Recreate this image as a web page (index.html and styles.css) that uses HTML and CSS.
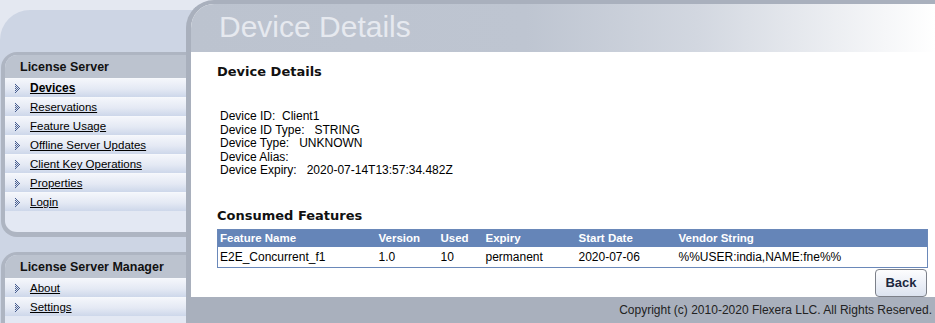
FILE: index.html
```html
<!DOCTYPE html>
<html lang="en">
<head>
  <meta charset="UTF-8" />
  <title>Device Details</title>
  <link rel="stylesheet" href="styles.css">
</head>
<body>
  <div class="layout">
    <!-- Menu lateral -->
    <aside class="sidebar">
      <div class="navbox">
        <div class="navbox-title">License Server</div>
        <ul class="navlist">
          <li class="nav-item active"><svg class="arrow" width="7" height="9" viewBox="0 0 7 9"><path d="M0 0h1v1H0zM1 1h1v1H1zM0 2h1v1H0zM2 2h1v1H2zM1 3h1v1H1zM3 3h1v1H3zM0 4h1v1H0zM2 4h1v1H2zM4 4h1v1H4zM1 5h1v1H1zM3 5h1v1H3zM0 6h1v1H0zM2 6h1v1H2zM1 7h1v1H1zM0 8h1v1H0z"/></svg><a href="#">Devices</a></li>
          <li class="nav-item"><svg class="arrow" width="7" height="9" viewBox="0 0 7 9"><path d="M0 0h1v1H0zM1 1h1v1H1zM0 2h1v1H0zM2 2h1v1H2zM1 3h1v1H1zM3 3h1v1H3zM0 4h1v1H0zM2 4h1v1H2zM4 4h1v1H4zM1 5h1v1H1zM3 5h1v1H3zM0 6h1v1H0zM2 6h1v1H2zM1 7h1v1H1zM0 8h1v1H0z"/></svg><a href="#">Reservations</a></li>
          <li class="nav-item"><svg class="arrow" width="7" height="9" viewBox="0 0 7 9"><path d="M0 0h1v1H0zM1 1h1v1H1zM0 2h1v1H0zM2 2h1v1H2zM1 3h1v1H1zM3 3h1v1H3zM0 4h1v1H0zM2 4h1v1H2zM4 4h1v1H4zM1 5h1v1H1zM3 5h1v1H3zM0 6h1v1H0zM2 6h1v1H2zM1 7h1v1H1zM0 8h1v1H0z"/></svg><a href="#">Feature Usage</a></li>
          <li class="nav-item"><svg class="arrow" width="7" height="9" viewBox="0 0 7 9"><path d="M0 0h1v1H0zM1 1h1v1H1zM0 2h1v1H0zM2 2h1v1H2zM1 3h1v1H1zM3 3h1v1H3zM0 4h1v1H0zM2 4h1v1H2zM4 4h1v1H4zM1 5h1v1H1zM3 5h1v1H3zM0 6h1v1H0zM2 6h1v1H2zM1 7h1v1H1zM0 8h1v1H0z"/></svg><a href="#">Offline Server Updates</a></li>
          <li class="nav-item"><svg class="arrow" width="7" height="9" viewBox="0 0 7 9"><path d="M0 0h1v1H0zM1 1h1v1H1zM0 2h1v1H0zM2 2h1v1H2zM1 3h1v1H1zM3 3h1v1H3zM0 4h1v1H0zM2 4h1v1H2zM4 4h1v1H4zM1 5h1v1H1zM3 5h1v1H3zM0 6h1v1H0zM2 6h1v1H2zM1 7h1v1H1zM0 8h1v1H0z"/></svg><a href="#">Client Key Operations</a></li>
          <li class="nav-item"><svg class="arrow" width="7" height="9" viewBox="0 0 7 9"><path d="M0 0h1v1H0zM1 1h1v1H1zM0 2h1v1H0zM2 2h1v1H2zM1 3h1v1H1zM3 3h1v1H3zM0 4h1v1H0zM2 4h1v1H2zM4 4h1v1H4zM1 5h1v1H1zM3 5h1v1H3zM0 6h1v1H0zM2 6h1v1H2zM1 7h1v1H1zM0 8h1v1H0z"/></svg><a href="#">Properties</a></li>
          <li class="nav-item"><svg class="arrow" width="7" height="9" viewBox="0 0 7 9"><path d="M0 0h1v1H0zM1 1h1v1H1zM0 2h1v1H0zM2 2h1v1H2zM1 3h1v1H1zM3 3h1v1H3zM0 4h1v1H0zM2 4h1v1H2zM4 4h1v1H4zM1 5h1v1H1zM3 5h1v1H3zM0 6h1v1H0zM2 6h1v1H2zM1 7h1v1H1zM0 8h1v1H0z"/></svg><a href="#">Login</a></li>
        </ul>
        <div class="navbox-fill"></div>
      </div>

      <div class="navbox">
        <div class="navbox-title">License Server Manager</div>
        <ul class="navlist">
          <li class="nav-item"><svg class="arrow" width="7" height="9" viewBox="0 0 7 9"><path d="M0 0h1v1H0zM1 1h1v1H1zM0 2h1v1H0zM2 2h1v1H2zM1 3h1v1H1zM3 3h1v1H3zM0 4h1v1H0zM2 4h1v1H2zM4 4h1v1H4zM1 5h1v1H1zM3 5h1v1H3zM0 6h1v1H0zM2 6h1v1H2zM1 7h1v1H1zM0 8h1v1H0z"/></svg><a href="#">About</a></li>
          <li class="nav-item"><svg class="arrow" width="7" height="9" viewBox="0 0 7 9"><path d="M0 0h1v1H0zM1 1h1v1H1zM0 2h1v1H0zM2 2h1v1H2zM1 3h1v1H1zM3 3h1v1H3zM0 4h1v1H0zM2 4h1v1H2zM4 4h1v1H4zM1 5h1v1H1zM3 5h1v1H3zM0 6h1v1H0zM2 6h1v1H2zM1 7h1v1H1zM0 8h1v1H0z"/></svg><a href="#">Settings</a></li>
        </ul>
        <div class="navbox-fill"></div>
      </div>
    </aside>

    <!-- Conteúdo principal -->
    <div class="main-wrap">
      <div class="main">
        <div class="page-header">
          <h1>Device Details</h1>
        </div>

        <div class="content">
          <h2>Device Details</h2>
          <div class="details">
            <div>Device ID:&nbsp; Client1</div>
            <div>Device ID Type:&nbsp;&nbsp; STRING</div>
            <div>Device Type:&nbsp;&nbsp; UNKNOWN</div>
            <div>Device Alias:</div>
            <div>Device Expiry:&nbsp;&nbsp; 2020-07-14T13:57:34.482Z</div>
          </div>

          <h2 class="section-title">Consumed Features</h2>
          <table class="features">
            <thead>
              <tr>
                <th class="col-name">Feature Name</th>
                <th class="col-version">Version</th>
                <th class="col-used">Used</th>
                <th class="col-expiry">Expiry</th>
                <th class="col-start">Start Date</th>
                <th>Vendor String</th>
              </tr>
            </thead>
            <tbody>
              <tr>
                <td>E2E_Concurrent_f1</td>
                <td>1.0</td>
                <td>10</td>
                <td>permanent</td>
                <td>2020-07-06</td>
                <td>%%USER:india,NAME:fne%%</td>
              </tr>
            </tbody>
          </table>

          <div class="actions">
            <button class="btn-back">Back</button>
          </div>
        </div>

        <div class="footer">Copyright (c) 2010-2020 Flexera LLC. All Rights Reserved.</div>
      </div>
    </div>
  </div>
</body>
</html>
```

FILE: styles.css
```css
* {
  box-sizing: border-box;
}

body {
  margin: 0;
  height: 100vh;
  overflow: hidden;
  background: #e4e8f1;
  font-family: 'Liberation Sans', Arial, sans-serif;
  font-size: 12px;
  color: #000;
}

.layout {
  display: grid;
  grid-template-columns: 186px 1fr;
  grid-template-rows: minmax(0, 1fr);
  height: 100%;
}

/* menu lateral */
.sidebar {
  min-height: 0;
  overflow: hidden;
  margin-top: 10px;
  padding-top: 42px;
  background: #cdd5e4;
  border-top-left-radius: 30px;
}

.navbox {
  margin-left: 1px;
  border: solid #aeb5c2;
  border-width: 3px 0 5px 4px;
  border-radius: 16px 0 0 16px;
  background: #e3e8f3;
  overflow: hidden;
}

.navbox + .navbox {
  margin-top: 15px;
}

.navbox-title {
  height: 23px;
  line-height: 24px;
  padding-left: 15px;
  background: #bcc3cf;
  font-size: 12.5px;
  font-weight: bold;
  color: #111;
}

.navlist {
  list-style: none;
  margin: 0;
  padding: 0;
}

.nav-item {
  display: flex;
  align-items: center;
  gap: 8px;
  height: 19px;
  padding-left: 10px;
  border-top: 1px solid #f6f8fc;
  background: linear-gradient(#f4f6fb, #e4e9f4 55%, #cdd7ea);
  font-size: 11.5px;
}

.nav-item .arrow {
  fill: #465c8e;
  flex-shrink: 0;
}

.nav-item a {
  color: #000;
  text-decoration: underline;
}

.nav-item.active a {
  font-size: 12px;
  font-weight: bold;
}

.navbox-fill {
  height: 21px;
}

/* área principal */
.main-wrap {
  min-height: 0;
  background: linear-gradient(#e4e8f1 10px, #cdd5e4 10px);
}

.main {
  height: 100%;
  display: flex;
  flex-direction: column;
  background: #fff;
  border-left: 5px solid #a9b0bd;
  border-top: 4px solid #a9b0bd;
  border-top-left-radius: 28px;
  overflow: hidden;
}

.page-header {
  flex-shrink: 0;
  height: 48px;
  padding: 6px 0 0 28px;
  background: linear-gradient(to right, #bcc3cf, #bec5d1 45%, #d2d7e0 68%, #fff);
}

.page-header h1 {
  margin: 0;
  font-size: 30px;
  font-weight: normal;
  line-height: 34px;
  color: #e6e9ef;
}

.content {
  flex: 1;
  min-height: 0;
  display: flex;
  flex-direction: column;
  padding: 12px 7px 0 26px;
}

.content h2 {
  margin: 0;
  font-family: 'DejaVu Sans', sans-serif;
  font-size: 13px;
  font-weight: bold;
  line-height: 16px;
  color: #111;
}

.details {
  margin: 30px 0 0 3px;
  line-height: 13.5px;
}

.content .section-title {
  margin-top: 30px;
}

.features {
  margin-top: 5px;
  width: 100%;
  border-collapse: collapse;
  border: 1px solid #6a88b9;
}

.features th {
  height: 18px;
  padding: 0 2px;
  background: #6585b8;
  color: #fff;
  font-size: 11.5px;
  text-align: left;
}

.features td {
  height: 20px;
  padding: 0 2px;
}

.col-name { width: 159px; }
.col-version { width: 62px; }
.col-used { width: 45px; }
.col-expiry { width: 93px; }
.col-start { width: 100px; }

.actions {
  display: flex;
  justify-content: flex-end;
  margin-top: 1px;
  padding-right: 1px;
}

.btn-back {
  width: 52px;
  height: 28px;
  border: 1px solid #7c8089;
  border-radius: 4px;
  background: linear-gradient(#fdfdfe, #dce3f0);
  font-family: 'Liberation Sans', Arial, sans-serif;
  font-size: 13px;
  font-weight: bold;
  color: #1c2740;
  cursor: pointer;
}

.footer {
  flex-shrink: 0;
  height: 26px;
  line-height: 26px;
  padding-right: 3px;
  background: #a9b0bd;
  text-align: right;
  color: #222;
}
```
